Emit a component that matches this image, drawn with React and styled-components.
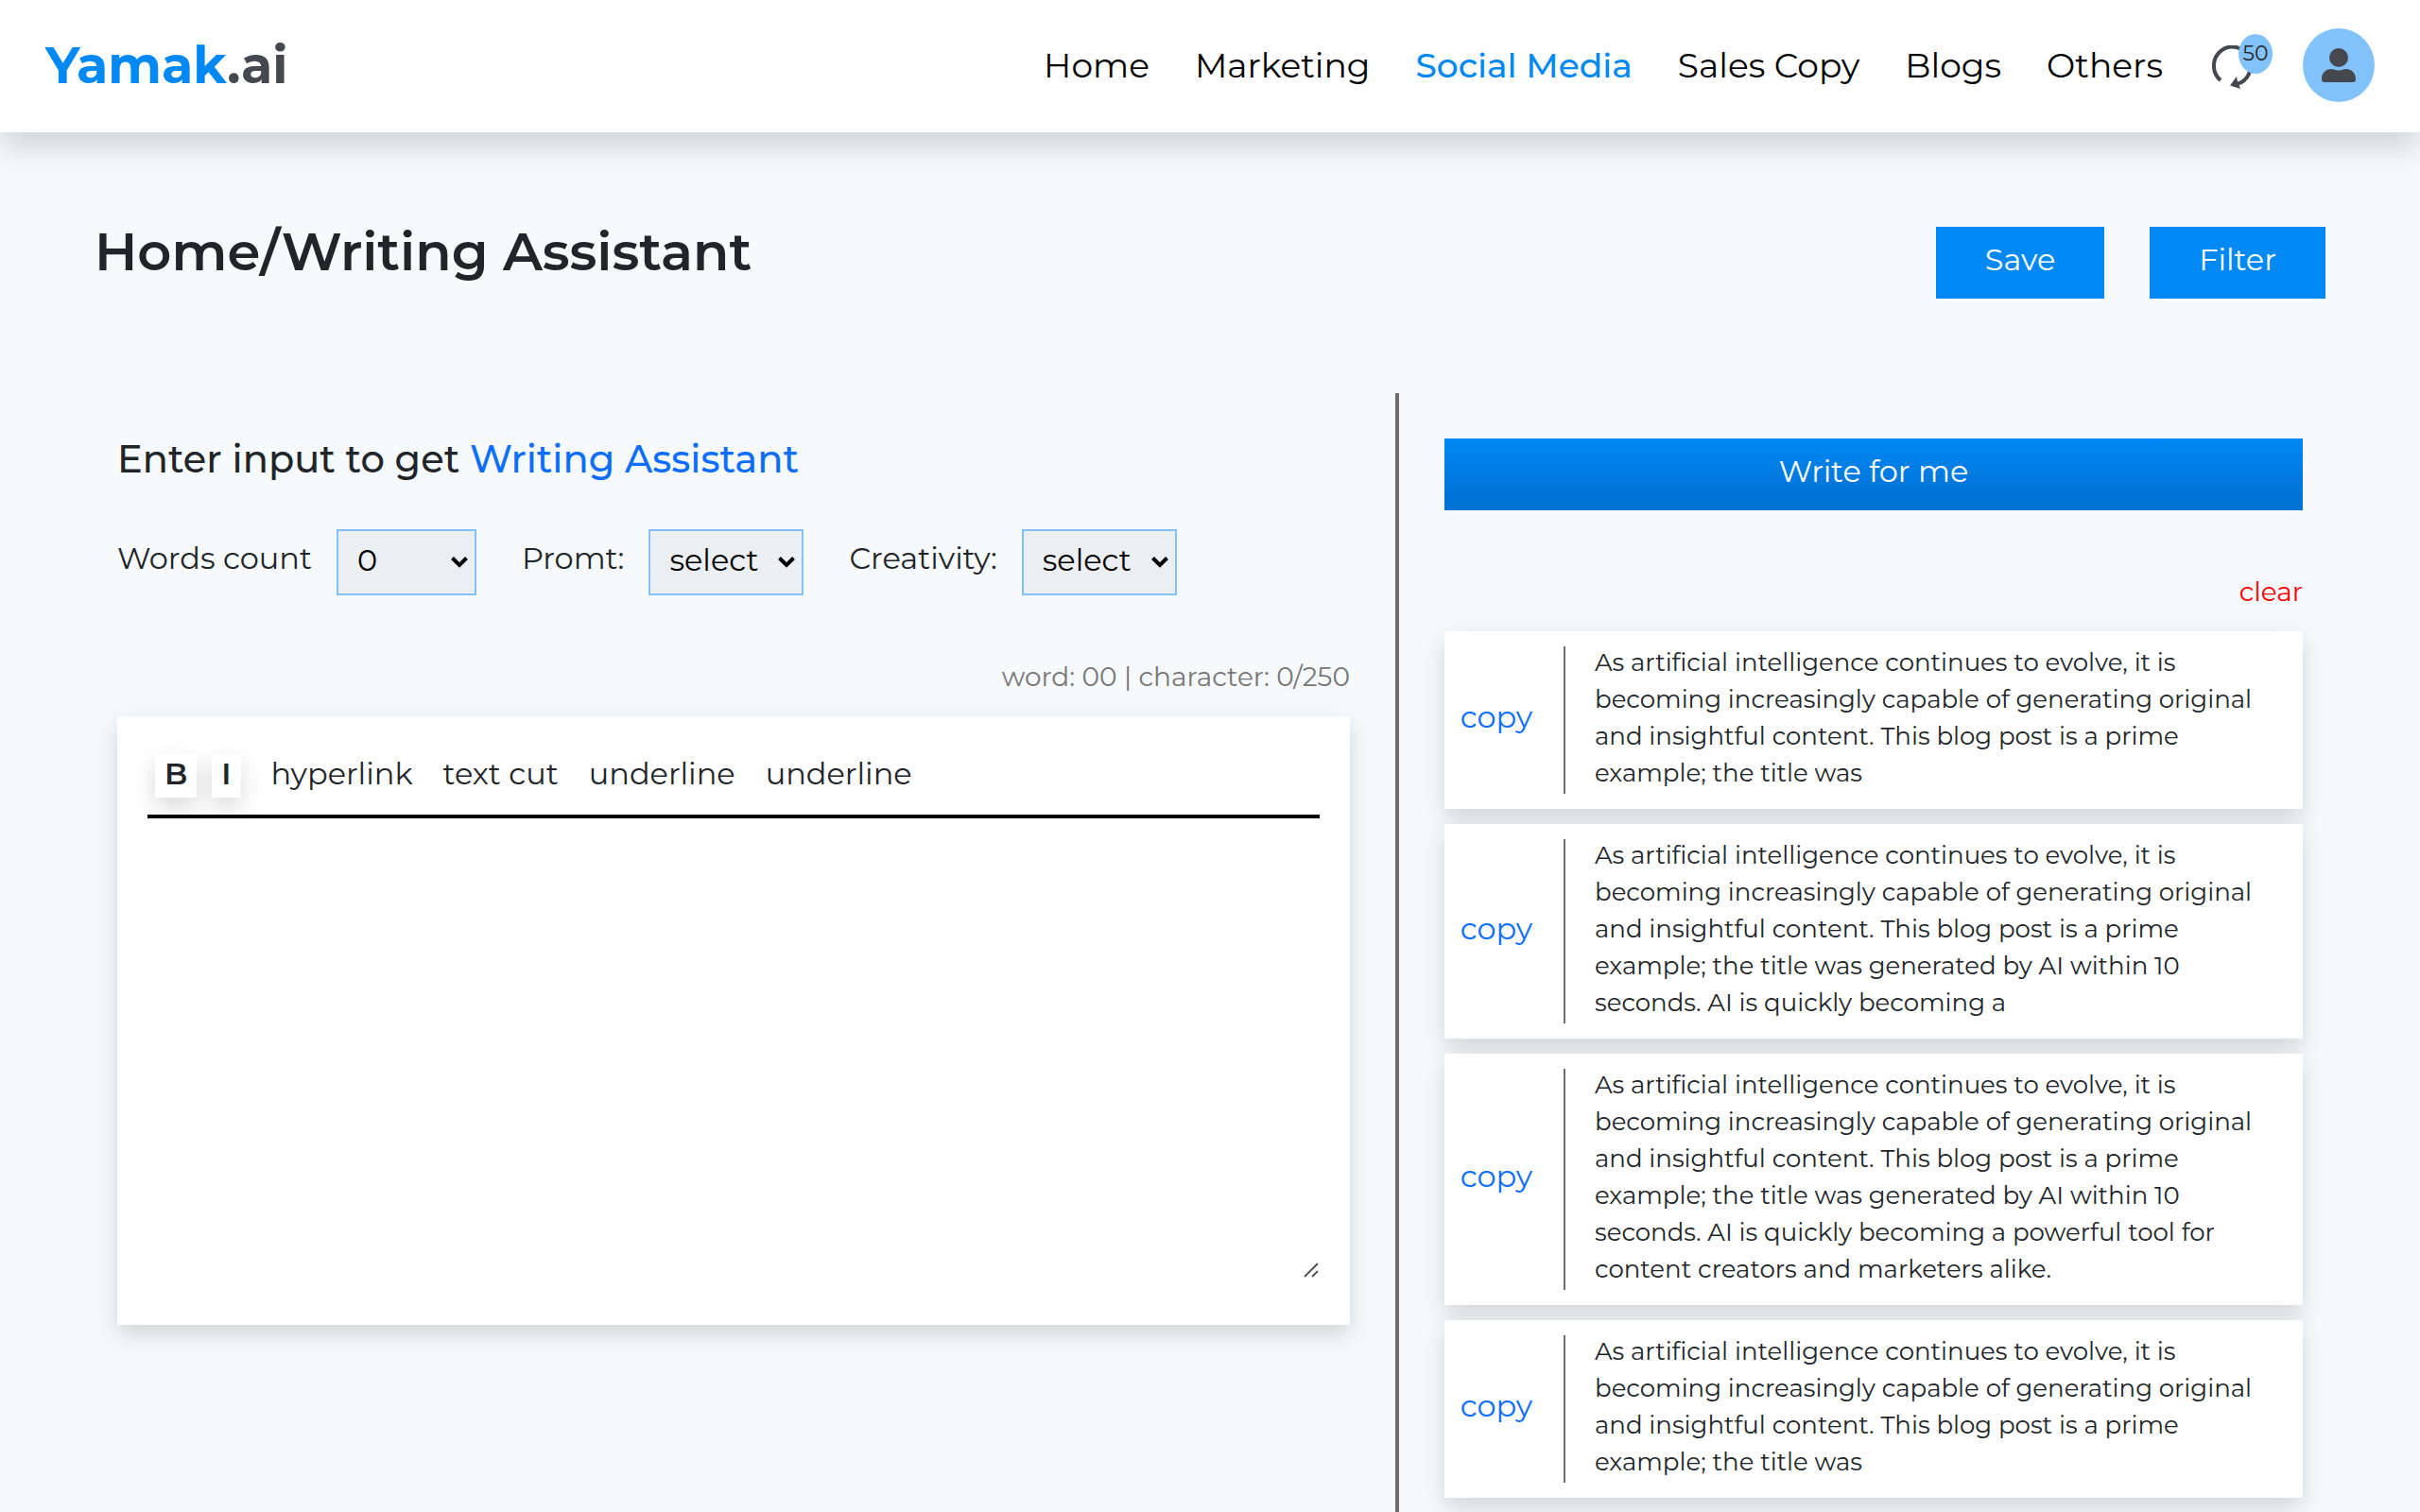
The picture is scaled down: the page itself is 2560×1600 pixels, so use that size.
import React from "react";
import styled, { createGlobalStyle, css } from "styled-components";

const color = {
  page: "#f6fafd",
  text: "#212529",
  blue: "#0088f5",
  link: "#0d6efd",
  light: "#81c2fb",
  dark: "#45484f",
  line: "#6e6e6e",
};

const cardShadow = "0 10px 24px rgba(0, 0, 0, 0.15)";

const GlobalStyle = createGlobalStyle`
  * {
    box-sizing: border-box;
  }

  body {
    margin: 0;
    background: ${color.page};
    color: ${color.text};
    font-family: Montserrat, Inter, sans-serif;
    font-size: 32px;
    line-height: 48px;
  }

  button, select, textarea {
    margin: 0;
    font: inherit;
    color: inherit;
  }

  a {
    text-decoration: none;
  }
`;

const Page = styled.div`
  min-height: 100vh;
  display: flex;
  flex-direction: column;
`;

const NavBar = styled.header`
  height: 140px;
  padding: 0 48px 2px;
  display: flex;
  align-items: center;
  justify-content: space-between;
  background: white;
  box-shadow: 0 16px 32px rgba(0, 0, 0, 0.15);
`;

const Logo = styled.a`
  font-size: 54px;
  font-weight: 700;
  color: ${color.blue};

  span {
    color: ${color.dark};
  }
`;

const NavLinks = styled.nav`
  display: flex;
  align-items: center;
  gap: 48px;
`;

const NavLink = styled.a`
  font-size: 36px;
  color: ${props => (props.$active ? color.blue : "black")};
  font-weight: ${props => (props.$active ? 500 : 400)};
`;

const Credits = styled.div`
  position: relative;
  width: 68px;
  height: 66px;

  svg {
    position: absolute;
    left: 4px;
    top: 12px;
  }
`;

const CreditsBadge = styled.span`
  position: absolute;
  right: 0;
  top: 0;
  width: 36px;
  height: 42px;
  border-radius: 50%;
  background: ${color.light};
  font-size: 22px;
  line-height: 42px;
  text-align: center;
`;

const Avatar = styled.button`
  width: 76px;
  height: 78px;
  margin-left: -16px;
  padding: 0;
  display: grid;
  place-items: center;
  border: none;
  border-radius: 50%;
  background: ${color.light};
`;

const Main = styled.main`
  flex: 1;
  padding: 100px 100px 0;
  display: flex;
  flex-direction: column;
`;

const TitleRow = styled.div`
  height: 176px;
  display: flex;
  justify-content: space-between;
  align-items: flex-start;
`;

const Title = styled.h1`
  margin: 0;
  font-size: 56px;
  line-height: 52px;
  font-weight: 600;
`;

const Actions = styled.div`
  display: flex;
  gap: 48px;
`;

const Button = styled.button`
  height: 76px;
  padding: 0 52px 6px;
  border: none;
  background: ${color.blue};
  color: white;

  ${props =>
    props.$wide &&
    css`
      width: 100%;
      background: linear-gradient(${color.blue}, #0073d6 80%);
    `}
`;

const Columns = styled.div`
  flex: 1;
  display: grid;
  grid-template-columns: 172fr 123fr;
`;

const InputColumn = styled.section`
  padding: 44px 48px 0 24px;
`;

const ResultColumn = styled.section`
  padding: 48px 24px 14px 48px;
  border-left: 4px solid ${color.line};
`;

const Heading = styled.h2`
  margin: 0;
  font-size: 40px;
  line-height: 52px;
  font-weight: 500;

  span {
    color: ${color.link};
  }
`;

const Fields = styled.div`
  margin-top: 48px;
  display: flex;
  gap: 48px;
`;

const Field = styled.label`
  display: flex;
  gap: 26px;
  line-height: 62px;
`;

const SelectBox = styled.span`
  position: relative;
  width: ${props => props.$width}px;
  height: 70px;

  svg {
    position: absolute;
    right: 8px;
    top: 28px;
    pointer-events: none;
  }
`;

const Select = styled.select`
  appearance: none;
  width: 100%;
  height: 70px;
  padding: 0 20px 4px;
  border: 2px solid ${color.light};
  border-radius: 0;
  background: #ebeff2;
  color: black;
`;

const Counter = styled.p`
  margin: 62px 0 18px;
  font-size: 28px;
  text-align: right;
  color: #777;
`;

const Editor = styled.div`
  padding: 32px 32px 48px;
  background: white;
  box-shadow: ${cardShadow};
`;

const Toolbar = styled.div`
  height: 76px;
  padding: 8px 8px 0;
  display: flex;
  align-items: flex-start;
  gap: 32px;
  border-bottom: 4px solid black;
`;

const MarkButtons = styled.div`
  display: flex;
  gap: 16px;
`;

const ToolButton = styled.button`
  height: 46px;
  padding: 0 0 4px;
  border: none;
  background: white;
  line-height: 40px;
`;

const MarkButton = styled(ToolButton)`
  padding: 0 10px 4px;
  font-weight: 600;
  box-shadow: ${cardShadow};
`;

const TextWrap = styled.div`
  position: relative;

  svg {
    position: absolute;
    right: 1px;
    bottom: 2px;
    pointer-events: none;
  }
`;

const TextArea = styled.textarea`
  display: block;
  width: 100%;
  height: 488px;
  padding: 16px 0;
  border: none;
  outline: none;
  resize: none;
  background: none;
`;

const ClearRow = styled.div`
  margin: 62px 0 18px;
  display: flex;
  justify-content: flex-end;
`;

const ClearButton = styled.button`
  padding: 0;
  border: none;
  background: none;
  font-size: 28px;
  color: red;
`;

const Results = styled.div`
  display: flex;
  flex-direction: column;
  gap: 16px;
`;

const ResultCard = styled.article`
  padding: 16px;
  display: flex;
  background: white;
  box-shadow: ${cardShadow};
`;

const CopyButton = styled.button`
  width: 112px;
  padding: 0 32px 6px 0;
  border: none;
  border-right: 2px solid ${color.line};
  background: none;
  color: ${color.link};
`;

const ResultText = styled.p`
  flex: 1;
  margin: -2px 0 2px;
  padding: 0 16px 0 31px;
  font-size: 26px;
  line-height: 39px;
`;

const links = ["Home", "Marketing", "Social Media", "Sales Copy", "Blogs", "Others"];

const tools = ["hyperlink", "text cut", "underline", "underline"];

const shortText =
  "As artificial intelligence continues to evolve, it is becoming increasingly capable of generating original and insightful content. This blog post is a prime example; the title was";

const results = [
  shortText,
  `${shortText} generated by AI within 10 seconds. AI is quickly becoming a`,
  `${shortText} generated by AI within 10 seconds. AI is quickly becoming a powerful tool for content creators and marketers alike.`,
  shortText,
];

const RefreshIcon = () => (
  <svg width="48" height="52" viewBox="0 0 48 52" fill="none" aria-hidden="true">
    <path d="M9 37A19.500 20 0 1 1 26 41" stroke={color.dark} strokeWidth="4" />
    <path d="M19 42.500l7-9.500 1 5L30 46z" fill={color.dark} />
  </svg>
);

const UserIcon = () => (
  <svg width="36" height="36" viewBox="0 0 36 36" fill={color.dark} aria-hidden="true">
    <circle cx="18" cy="10" r="10" />
    <path d="M0 33v-1c0-6 5-10 10-10 3 0 5 1.500 8 1.500s5-1.500 8-1.500c5 0 10 4 10 10v1q0 3-3 3H3q-3 0-3-3z" />
  </svg>
);

const Chevron = () => (
  <svg width="20" height="14" viewBox="0 0 20 14" fill="none" aria-hidden="true">
    <path d="M2.500 2.500L10 10l7.500-7.500" stroke="black" strokeWidth="4" />
  </svg>
);

const ResizeGrip = () => (
  <svg width="16" height="16" viewBox="0 0 16 16" aria-hidden="true">
    <path d="M1 15L15 1M9 15l6-6" stroke="#555" strokeWidth="2" />
  </svg>
);

const SelectField = ({ label, width, options }) => (
  <Field>
    {label}
    <SelectBox $width={width}>
      <Select>
        {options.map(option => (
          <option key={option}>{option}</option>
        ))}
      </Select>
      <Chevron />
    </SelectBox>
  </Field>
);

const Header = () => (
  <NavBar>
    <Logo href="#">
      Yamak<span>.ai</span>
    </Logo>
    <NavLinks>
      {links.map(link => (
        <NavLink key={link} href="#" $active={link === "Social Media"}>
          {link}
        </NavLink>
      ))}
      <Credits>
        <RefreshIcon />
        <CreditsBadge>50</CreditsBadge>
      </Credits>
      <Avatar aria-label="Account">
        <UserIcon />
      </Avatar>
    </NavLinks>
  </NavBar>
);

const App = () => (
  <Page>
    <GlobalStyle />
    <Header />
    <Main>
      <TitleRow>
        <Title>Home/Writing Assistant</Title>
        <Actions>
          <Button>Save</Button>
          <Button>Filter</Button>
        </Actions>
      </TitleRow>
      <Columns>
        <InputColumn>
          <Heading>
            Enter input to get <span>Writing Assistant</span>
          </Heading>
          <Fields>
            <SelectField label="Words count" width={148} options={["0", "50", "100"]} />
            <SelectField label="Promt:" width={164} options={["select"]} />
            <SelectField label="Creativity:" width={164} options={["select"]} />
          </Fields>
          <Counter>word: 00 | character: 0/250</Counter>
          <Editor>
            <Toolbar>
              <MarkButtons>
                <MarkButton>B</MarkButton>
                <MarkButton>I</MarkButton>
              </MarkButtons>
              {tools.map((tool, i) => (
                <ToolButton key={i}>{tool}</ToolButton>
              ))}
            </Toolbar>
            <TextWrap>
              <TextArea aria-label="Text" />
              <ResizeGrip />
            </TextWrap>
          </Editor>
        </InputColumn>
        <ResultColumn>
          <Button $wide>Write for me</Button>
          <ClearRow>
            <ClearButton>clear</ClearButton>
          </ClearRow>
          <Results>
            {results.map((text, i) => (
              <ResultCard key={i}>
                <CopyButton>copy</CopyButton>
                <ResultText>{text}</ResultText>
              </ResultCard>
            ))}
          </Results>
        </ResultColumn>
      </Columns>
    </Main>
  </Page>
);

export default App;
